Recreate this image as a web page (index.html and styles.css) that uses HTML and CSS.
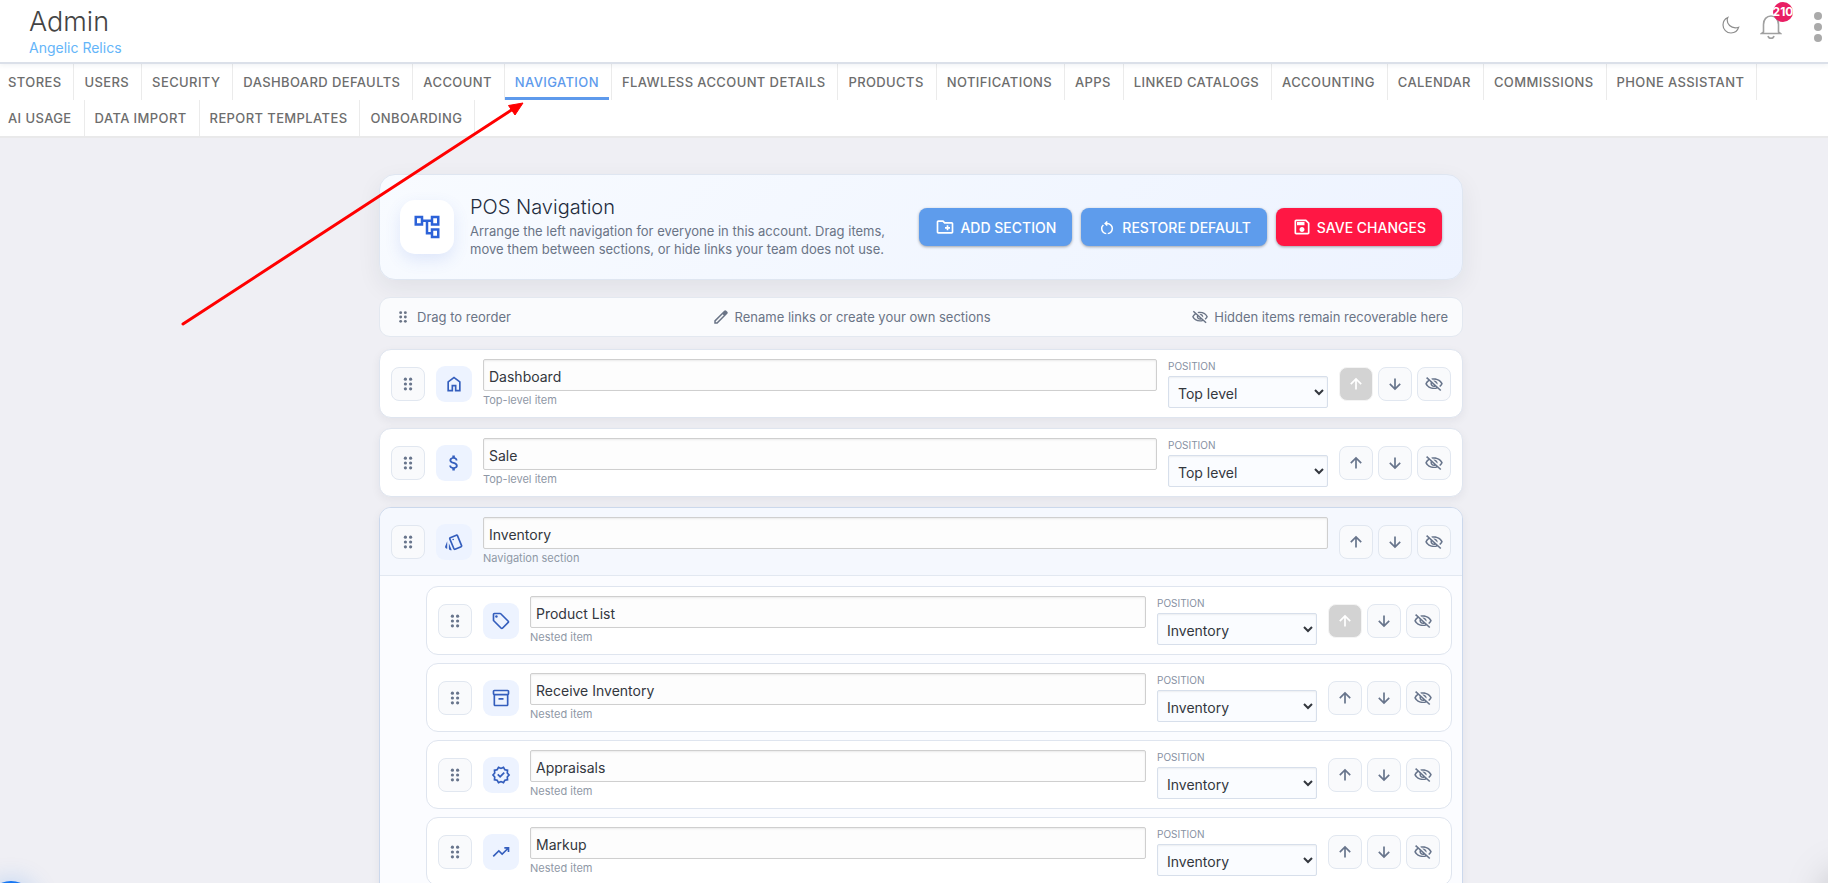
FILE: index.html
```html
<!DOCTYPE html>
<html lang="en">
<head>
<meta charset="utf-8">
<meta name="viewport" content="width=device-width, initial-scale=1">
<title>Admin - POS Navigation</title>
<link rel="stylesheet" href="styles.css">
</head>
<body>
<svg class="sprite" aria-hidden="true">
  <symbol id="drag" viewBox="0 0 20 20"><circle cx="7.4" cy="5.2" r="1.6"/><circle cx="12.6" cy="5.2" r="1.6"/><circle cx="7.4" cy="10" r="1.6"/><circle cx="12.6" cy="10" r="1.6"/><circle cx="7.4" cy="14.8" r="1.6"/><circle cx="12.6" cy="14.8" r="1.6"/></symbol>
  <symbol id="tree" viewBox="0 0 24 24"><path d="M22 11V3h-7v3H9V3H2v8h7V8h2v10h4v3h7v-8h-7v3h-2V8h2v3h7zM7 9H4V5h3v4zm10 6h3v4h-3v-4zm0-10h3v4h-3V5z"/></symbol>
  <symbol id="folder" viewBox="0 0 24 24"><path d="M20 6h-8l-2-2H4c-1.11 0-1.99.89-1.99 2L2 18c0 1.11.89 2 2 2h16c1.11 0 2-.89 2-2V8c0-1.11-.89-2-2-2zm0 12H4V6h5.17l2 2H20v10zm-6-2h2v-2h2v-2h-2v-2h-2v2h-2v2h2z"/></symbol>
  <symbol id="restore" viewBox="0 0 24 24"><path transform="translate(1.1 2.6) scale(.91 .87)" d="M11 20.95q-3.025-.375-5.012-2.638T4 13q0-1.65.65-3.162T6.5 7.2l1.425 1.425q-.95.85-1.437 1.975T6 13q0 2.2 1.4 3.888T11 18.95v2zm2 0v-2q2.175-.4 3.588-2.075T18 13q0-2.5-1.75-4.25T12 7h-.075l1.1 1.1-1.4 1.4-3.5-3.5 3.5-3.5 1.4 1.4L11.925 5H12q3.35 0 5.675 2.325T20 13q0 3.025-1.988 5.288T13 20.95z"/></symbol>
  <symbol id="save" viewBox="0 0 24 24"><path d="M17 3H5c-1.11 0-2 .9-2 2v14c0 1.1.89 2 2 2h14c1.1 0 2-.9 2-2V7l-4-4zm2 16H5V5h11.17L19 7.83V19zm-7-7c-1.66 0-3 1.34-3 3s1.34 3 3 3 3-1.34 3-3-1.34-3-3-3zM6 6h9v4H6z"/></symbol>
  <symbol id="edit" viewBox="0 0 24 24"><path fill-rule="evenodd" d="M3 21v-4.250L16.200 3.600q.6-.6 1.400-.6t1.400.6L20.400 5q.6.6.6 1.400t-.6 1.400L7.250 21zM5 19h1.400l9.300-9.250-1.450-1.450L5 17.600z"/></symbol>
  <symbol id="hide" viewBox="0 0 24 24"><path transform="translate(.5 1.6) scale(.96 .87)" d="M12 6c3.79 0 7.17 2.13 8.82 5.5-.59 1.22-1.42 2.27-2.41 3.12l1.41 1.41c1.39-1.23 2.49-2.77 3.18-4.53C21.27 7.11 17 4 12 4c-1.27 0-2.49.2-3.64.57l1.65 1.65C10.66 6.09 11.32 6 12 6zm-1.07 1.14L13 9.21c.57.25 1.03.71 1.28 1.28l2.07 2.07c.08-.34.14-.7.14-1.07C16.5 9.01 14.48 7 12 7c-.37 0-.72.05-1.07.14zM2.01 3.87l2.68 2.68C3.06 7.83 1.77 9.53 1 11.5 2.73 15.89 7 19 12 19c1.52 0 2.98-.29 4.32-.82l3.42 3.42 1.41-1.41L3.42 2.45 2.01 3.87zm7.5 7.5l2.61 2.61c-.04.01-.08.02-.12.02-1.38 0-2.5-1.12-2.5-2.5 0-.05.01-.08.01-.13zm-3.4-3.4l1.75 1.75c-.23.55-.36 1.15-.36 1.78 0 2.48 2.02 4.5 4.5 4.5.63 0 1.23-.13 1.77-.36l.98.98c-.88.24-1.8.38-2.75.38-3.79 0-7.17-2.13-8.82-5.5.7-1.43 1.72-2.61 2.93-3.53z"/></symbol>
  <symbol id="up" viewBox="0 0 20 20"><path class="arrow" d="M10 15.500V5.200M4.800 10.200L10 5l5.200 5.200"/></symbol>
  <symbol id="down" viewBox="0 0 20 20"><path class="arrow" d="M10 4.500v10.300M4.800 9.800L10 15l5.200-5.200"/></symbol>
  <symbol id="home" viewBox="0 0 24 24"><path d="M6 19h3v-6h6v6h3v-9l-6-4.500L6 10zm-2 2V9l8-6 8 6v12h-7v-6h-2v6z"/></symbol>
  <symbol id="dollar" viewBox="0 0 24 24"><path d="M11.8 10.9c-2.27-.59-3-1.2-3-2.15 0-1.09 1.01-1.85 2.7-1.85 1.78 0 2.44.85 2.5 2.1h2.21c-.07-1.72-1.12-3.3-3.21-3.810V3h-3v2.160c-1.940.420-3.500 1.680-3.500 3.610 0 2.310 1.910 3.460 4.700 4.130 2.500.6 3 1.480 3 2.410 0 .69-.49 1.790-2.700 1.790-2.060 0-2.870-.92-2.980-2.100h-2.200c.12 2.190 1.760 3.420 3.680 3.830V21h3v-2.150c1.950-.37 3.500-1.500 3.500-3.550 0-2.840-2.430-3.810-4.700-4.400z"/></symbol>
  <symbol id="cards" viewBox="0 0 24 24"><path d="M2.530 19.650l1.340.56v-9.030l-2.430 5.860c-.41 1.020.08 2.190 1.090 2.610zm19.500-3.700L17.070 3.980c-.31-.75-1.040-1.210-1.810-1.230-.26 0-.53.04-.79.15L7.100 5.950c-.75.31-1.210 1.030-1.230 1.800-.01.27.04.54.15.8l4.960 11.970c.31.76 1.050 1.220 1.830 1.230.26 0 .52-.05.77-.15l7.360-3.050c1.020-.42 1.510-1.590 1.090-2.600zm-9.200 3.800L7.870 7.790l7.350-3.040h.01l4.950 11.950-7.350 3.050z"/><circle cx="11" cy="9" r="1"/><path d="M5.880 19.750c0 1.100.9 2 2 2h1.450l-3.450-8.340v6.340z"/></symbol>
  <symbol id="tag" viewBox="0 0 24 24"><path d="M21.410 11.580l-9-9C12.050 2.220 11.550 2 11 2H4c-1.100 0-2 .9-2 2v7c0 .55.220 1.050.590 1.420l9 9c.36.36.86.58 1.410.58s1.050-.22 1.410-.59l7-7c.37-.36.59-.86.59-1.410s-.23-1.060-.59-1.420zM13 20.010L4 11V4h7v-.01l9 9-7 7.020z"/><circle cx="6.500" cy="6.500" r="1.500"/></symbol>
  <symbol id="archive" viewBox="0 0 24 24"><path d="M20 2H4c-1 0-2 .9-2 2v3.010c0 .72.43 1.340 1 1.690V20c0 1.100 1.100 2 2 2h14c.9 0 2-.9 2-2V8.700c.57-.35 1-.97 1-1.690V4c0-1.100-1-2-2-2zm-1 18H5V9h14v11zm1-13H4V4h16v3zM9 12h6v2H9z"/></symbol>
  <symbol id="verified" viewBox="0 0 24 24"><path d="M23 12l-2.440-2.780.34-3.680-3.610-.82-1.890-3.180L12 3 8.600 1.540 6.710 4.720l-3.610.81.34 3.680L1 12l2.440 2.780-.34 3.690 3.610.82 1.890 3.180L12 21l3.400 1.460 1.890-3.180 3.610-.82-.34-3.680L23 12zm-4.510 2.110l.26 2.790-2.740.620-1.430 2.410L12 18.820l-2.580 1.110-1.430-2.410-2.740-.62.26-2.800L3.660 12l1.850-2.120-.26-2.780 2.740-.61 1.430-2.410L12 5.180l2.580-1.110 1.430 2.410 2.740.62-.26 2.790L20.340 12l-1.850 2.110zM10.950 15.550l5.650-5.650-1.400-1.450-4.250 4.250-2.150-2.100L7.400 12z"/></symbol>
  <symbol id="trend" viewBox="0 0 24 24"><path d="M3.400 18L2 16.600l7.400-7.450 4 4L18.600 8H16V6h6v6h-2V9.400L13.400 16l-4-4z"/></symbol>
</svg>

<div class="app">
  <header class="topbar">
    <div class="brand">
      <h1 class="brand-title">Admin</h1>
      <a class="brand-account" href="#">Angelic Relics</a>
    </div>
    <div class="tools">
      <button class="tool" type="button" aria-label="Dark mode"><svg class="moon" viewBox="0 0 18 18"><path d="M5.800 1.500C2.800 2.800 1 5.600 1 9a8 8 0 0 0 8 8c3.600 0 6.700-2.400 7.700-5.800-1 .4-2.200.6-3.400.6C8.800 11.800 5.200 8.200 5.200 4c0-.9.200-1.700.6-2.500z"/></svg></button>
      <button class="tool bell-button" type="button" aria-label="Notifications">
        <svg class="bell" viewBox="0 0 22 26"><path d="M3.500 18.500v-8C3.500 5.500 6.500 2 11 2s7.500 3.500 7.500 8.500v8M3.500 18l-2 1.500h19l-2-1.500M8 22c.4 1.500 1.500 2.300 3 2.300s2.600-.8 3-2.300"/></svg>
        <span class="badge">210</span>
      </button>
      <button class="tool dots" type="button" aria-label="More"><span></span><span></span><span></span></button>
    </div>
  </header>

  <nav class="tabs-bar" aria-label="Admin sections">
    <ul class="tabs">
      <li><a href="#">Stores</a></li><li><a href="#">Users</a></li><li><a href="#">Security</a></li><li><a href="#">Dashboard Defaults</a></li><li><a href="#">Account</a></li><li><a class="active" href="#" aria-current="page">Navigation</a></li><li><a href="#">Flawless Account Details</a></li><li><a href="#">Products</a></li><li><a href="#">Notifications</a></li><li><a href="#">Apps</a></li><li><a href="#">Linked Catalogs</a></li><li><a href="#">Accounting</a></li><li><a href="#">Calendar</a></li><li><a href="#">Commissions</a></li><li><a href="#">Phone Assistant</a></li><li><a href="#">AI Usage</a></li><li><a href="#">Data Import</a></li><li><a href="#">Report Templates</a></li><li><a href="#">Onboarding</a></li>
    </ul>
  </nav>

  <main class="page">
    <div class="editor">
      <section class="hero">
        <div class="hero-icon"><svg><use href="#tree"/></svg></div>
        <div class="hero-copy">
          <h2>POS Navigation</h2>
          <p>Arrange the left navigation for everyone in this account. Drag items, move them between sections, or hide links your team does not use.</p>
        </div>
        <div class="hero-actions">
          <button class="btn" type="button"><svg><use href="#folder"/></svg>Add Section</button>
          <button class="btn" type="button"><svg><use href="#restore"/></svg>Restore Default</button>
          <button class="btn btn-danger" type="button"><svg><use href="#save"/></svg>Save Changes</button>
        </div>
      </section>

      <div class="hints">
        <span><svg><use href="#drag"/></svg>Drag to reorder</span>
        <span><svg><use href="#edit"/></svg>Rename links or create your own sections</span>
        <span><svg><use href="#hide"/></svg>Hidden items remain recoverable here</span>
      </div>

      <div class="list">
        <article class="row card">
          <button class="icon-btn" type="button" aria-label="Drag"><svg><use href="#drag"/></svg></button>
          <span class="tile"><svg><use href="#home"/></svg></span>
          <div class="name"><input type="text" id="n1" aria-label="Name" value="Dashboard"><label for="n1">Top-level item</label></div>
          <div class="position"><label for="p1">Position</label><select id="p1"><option>Top level</option><option>Inventory</option></select></div>
          <div class="actions"><button class="icon-btn" type="button" aria-label="Move up" disabled><svg><use href="#up"/></svg></button><button class="icon-btn" type="button" aria-label="Move down"><svg><use href="#down"/></svg></button><button class="icon-btn" type="button" aria-label="Hide"><svg><use href="#hide"/></svg></button></div>
        </article>

        <article class="row card">
          <button class="icon-btn" type="button" aria-label="Drag"><svg><use href="#drag"/></svg></button>
          <span class="tile"><svg><use href="#dollar"/></svg></span>
          <div class="name"><input type="text" id="n2" aria-label="Name" value="Sale"><label for="n2">Top-level item</label></div>
          <div class="position"><label for="p2">Position</label><select id="p2"><option>Top level</option><option>Inventory</option></select></div>
          <div class="actions"><button class="icon-btn" type="button" aria-label="Move up"><svg><use href="#up"/></svg></button><button class="icon-btn" type="button" aria-label="Move down"><svg><use href="#down"/></svg></button><button class="icon-btn" type="button" aria-label="Hide"><svg><use href="#hide"/></svg></button></div>
        </article>

        <section class="group card">
          <div class="row group-head">
            <button class="icon-btn" type="button" aria-label="Drag"><svg><use href="#drag"/></svg></button>
            <span class="tile"><svg><use href="#cards"/></svg></span>
            <div class="name"><input type="text" id="n3" aria-label="Name" value="Inventory"><label for="n3">Navigation section</label></div>
            <div class="actions"><button class="icon-btn" type="button" aria-label="Move up"><svg><use href="#up"/></svg></button><button class="icon-btn" type="button" aria-label="Move down"><svg><use href="#down"/></svg></button><button class="icon-btn" type="button" aria-label="Hide"><svg><use href="#hide"/></svg></button></div>
          </div>
          <div class="group-body">
            <article class="row nested">
              <button class="icon-btn" type="button" aria-label="Drag"><svg><use href="#drag"/></svg></button>
              <span class="tile"><svg><use href="#tag"/></svg></span>
              <div class="name"><input type="text" id="n4" aria-label="Name" value="Product List"><label for="n4">Nested item</label></div>
              <div class="position"><label for="p4">Position</label><select id="p4"><option>Inventory</option><option>Top level</option></select></div>
              <div class="actions"><button class="icon-btn" type="button" aria-label="Move up" disabled><svg><use href="#up"/></svg></button><button class="icon-btn" type="button" aria-label="Move down"><svg><use href="#down"/></svg></button><button class="icon-btn" type="button" aria-label="Hide"><svg><use href="#hide"/></svg></button></div>
            </article>
            <article class="row nested">
              <button class="icon-btn" type="button" aria-label="Drag"><svg><use href="#drag"/></svg></button>
              <span class="tile"><svg><use href="#archive"/></svg></span>
              <div class="name"><input type="text" id="n5" aria-label="Name" value="Receive Inventory"><label for="n5">Nested item</label></div>
              <div class="position"><label for="p5">Position</label><select id="p5"><option>Inventory</option><option>Top level</option></select></div>
              <div class="actions"><button class="icon-btn" type="button" aria-label="Move up"><svg><use href="#up"/></svg></button><button class="icon-btn" type="button" aria-label="Move down"><svg><use href="#down"/></svg></button><button class="icon-btn" type="button" aria-label="Hide"><svg><use href="#hide"/></svg></button></div>
            </article>
            <article class="row nested">
              <button class="icon-btn" type="button" aria-label="Drag"><svg><use href="#drag"/></svg></button>
              <span class="tile"><svg><use href="#verified"/></svg></span>
              <div class="name"><input type="text" id="n6" aria-label="Name" value="Appraisals"><label for="n6">Nested item</label></div>
              <div class="position"><label for="p6">Position</label><select id="p6"><option>Inventory</option><option>Top level</option></select></div>
              <div class="actions"><button class="icon-btn" type="button" aria-label="Move up"><svg><use href="#up"/></svg></button><button class="icon-btn" type="button" aria-label="Move down"><svg><use href="#down"/></svg></button><button class="icon-btn" type="button" aria-label="Hide"><svg><use href="#hide"/></svg></button></div>
            </article>
            <article class="row nested">
              <button class="icon-btn" type="button" aria-label="Drag"><svg><use href="#drag"/></svg></button>
              <span class="tile"><svg><use href="#trend"/></svg></span>
              <div class="name"><input type="text" id="n7" aria-label="Name" value="Markup"><label for="n7">Nested item</label></div>
              <div class="position"><label for="p7">Position</label><select id="p7"><option>Inventory</option><option>Top level</option></select></div>
              <div class="actions"><button class="icon-btn" type="button" aria-label="Move up"><svg><use href="#up"/></svg></button><button class="icon-btn" type="button" aria-label="Move down"><svg><use href="#down"/></svg></button><button class="icon-btn" type="button" aria-label="Hide"><svg><use href="#hide"/></svg></button></div>
            </article>
          </div>
        </section>
      </div>
    </div>
  </main>

  <svg class="pointer" viewBox="0 0 360 240" aria-hidden="true"><path class="pointer-line" d="M13 234L343 19"/><path class="pointer-head" d="M353 13L338.500 15.500L345 25z"/></svg>
  <div class="bubble bubble-left"></div>
  <div class="bubble bubble-right"></div>
</div>
</body>
</html>
```

FILE: styles.css
```css
* { box-sizing: border-box; }

body {
  margin: 0;
  background: #efeff4;
  color: #33373e;
  font-family: Inter, "Liberation Sans", sans-serif;
  font-size: 14px;
}

h1, h2, p, ul { margin: 0; padding: 0; }
button, input, select { font: inherit; color: inherit; }
button { cursor: pointer; }
svg { display: block; fill: currentColor; }
.sprite { position: absolute; width: 0; height: 0; }
.arrow { fill: none; stroke: currentColor; stroke-width: 1.7; }

.app { position: relative; height: 100vh; overflow: hidden; }

/* Top bar */
.topbar {
  position: relative;
  z-index: 1;
  display: flex;
  justify-content: space-between;
  height: 64px;
  padding: 0 0 0 29px;
  background: #fff;
  border-bottom: 2px solid #dbe0e9;
  box-shadow: 0 1px 5px rgba(40, 70, 90, .08);
}
.brand-title {
  padding-top: 5px;
  font-size: 27px;
  font-weight: 300;
  line-height: 33px;
  color: #444;
}
.brand-account {
  display: block;
  font-size: 14px;
  line-height: 20px;
  color: #64b5f9;
  text-decoration: none;
}
.tools { display: flex; align-items: flex-start; padding: 14px 3px 0 0; }
.tool { padding: 0; border: 0; background: none; color: #8c8c8c; }
.moon { width: 18px; height: 18px; margin: 2px 20px 0 0; fill: none; stroke: currentColor; stroke-width: 1.2; }
.bell-button { position: relative; margin-right: 32px; }
.bell { width: 22px; height: 26px; fill: none; stroke: #a0a0a0; stroke-width: 1.6; }
.badge {
  position: absolute;
  top: -12px;
  left: 13px;
  display: flex;
  justify-content: center;
  width: 20px;
  height: 20px;
  border-radius: 50%;
  background: #e91e63;
  color: #fff;
  font-size: 12px;
  font-weight: 700;
  line-height: 20px;
}
.dots { display: grid; gap: 3px; padding: 0 3px 0 0; margin-top: -2px; }
.dots span { width: 8px; height: 8px; border-radius: 50%; background: #aaa; }

/* Tabs */
.tabs-bar { background: #fff; border-bottom: 2px solid #e9e9ea; }
.tabs { display: flex; flex-wrap: wrap; margin-left: -2px; list-style: none; }
.tabs li { padding-right: 2px; border-right: 1px solid #ebebeb; }
.tabs a {
  display: block;
  height: 36px;
  padding: 0 10px;
  border-bottom: 3px solid transparent;
  color: #6d6d6d;
  font-size: 13px;
  font-weight: 500;
  line-height: 37px;
  letter-spacing: .03em;
  text-transform: uppercase;
  text-decoration: none;
}
.tabs .active { color: #5e9aec; border-bottom-color: #5e9aec; }

/* Page */
.page { padding: 36px 14px 0 28px; }
.editor { max-width: 1084px; margin: 0 auto; }

.hero {
  display: flex;
  align-items: center;
  padding: 18px 20px;
  border: 1px solid #dfe6f1;
  border-radius: 16px;
  background: linear-gradient(135deg, #f8fbff, #edf3ff);
  box-shadow: 0 8px 24px rgba(30, 41, 59, .07);
}
.hero-icon {
  display: grid;
  place-items: center;
  flex: none;
  width: 54px;
  height: 54px;
  margin-right: 16px;
  border-radius: 15px;
  background: #fff;
  color: #2c62d8;
  box-shadow: 0 6px 16px rgba(60, 100, 220, .13);
}
.hero-icon svg { width: 30px; height: 30px; }
.hero-copy { flex: 0 1 420px; padding-bottom: 3px; }
.hero-copy h2 { font-size: 20px; font-weight: 300; line-height: 29px; color: #232c3d; }
.hero-copy p { font-size: 13px; line-height: 18px; color: #6a7486; }
.hero-actions { display: flex; gap: 9px; margin-left: auto; }
.btn {
  display: flex;
  align-items: center;
  gap: 5px;
  height: 38px;
  padding: 0 16px;
  border: 0;
  border-radius: 8px;
  background: #5e9cec;
  box-shadow: 0 1px 3px rgba(0, 0, 0, .35);
  color: #fff;
  font-weight: 500;
  text-transform: uppercase;
  white-space: nowrap;
}
.btn svg { width: 20px; height: 20px; }
.btn-danger { background: #ff1744; }

.hints {
  display: flex;
  justify-content: space-between;
  align-items: center;
  height: 40px;
  margin-top: 17px;
  padding: 0 14px;
  border: 1px solid #e3e8f0;
  border-radius: 11px;
  background: #fafbfd;
  color: #6a7486;
  font-size: 13px;
  line-height: 18px;
}
.hints span { display: flex; align-items: center; gap: 5px; }
.hints svg { width: 18px; height: 18px; }

.list { display: grid; gap: 10px; margin-top: 12px; }
.card {
  border: 1px solid #dfe5ef;
  border-radius: 12px;
  background: #fff;
  box-shadow: 0 3px 10px rgba(30, 41, 59, .06);
}
.row { display: flex; align-items: center; gap: 11px; padding: 9px 11px; }
.tile {
  display: grid;
  place-items: center;
  flex: none;
  width: 36px;
  height: 36px;
  border-radius: 9px;
  background: #edf3ff;
  color: #345ebd;
}
.tile svg { width: 20px; height: 20px; }
.icon-btn {
  display: grid;
  place-items: center;
  flex: none;
  width: 34px;
  height: 34px;
  padding: 0;
  border: 1px solid #e1e7f0;
  border-radius: 8px;
  background: #f9fafc;
  color: #68758c;
}
.icon-btn svg { width: 20px; height: 20px; }
.icon-btn:disabled { background: #d3d3d3; border-color: #f4f4f4; color: #fff; }
.name { flex: 1; display: grid; gap: 1px; min-width: 0; }
.name input {
  width: 100%;
  height: 32px;
  padding: 3px 5px 0;
  border: 1px solid #cfcfcf;
  border-radius: 2px;
  background: #fdfdfd;
  box-shadow: inset 0 1px 2px rgba(0, 0, 0, .08);
}
.name label { font-size: 11px; line-height: 16px; color: #8f98a6; }
.position { display: grid; gap: 3px; width: 160px; }
.position label { font-size: 10px; line-height: 14px; color: #8791a3; text-transform: uppercase; }
.position select {
  width: 100%;
  height: 32px;
  padding: 3px 5px 0;
  border: 1px solid #d7dfeb;
  border-radius: 2px;
  background-color: #fafcff;
  box-shadow: inset 0 1px 2px rgba(0, 0, 0, .06);
}
.actions { display: flex; gap: 5px; }

.group { border-color: #cbd8ec; background: #fbfcff; }
.group-head { border-bottom: 1px solid #e2e8f1; border-radius: 11px 11px 0 0; background: #f5f8fe; }
.group-body { display: grid; gap: 8px; padding: 10px 10px 10px 46px; }
.nested { border: 1px solid #dfe5ef; border-radius: 12px; background: #fff; }

/* Overlays */
.pointer { position: absolute; top: 90px; left: 170px; width: 360px; height: 240px; pointer-events: none; z-index: 2; }
.pointer-line { fill: none; stroke: #f00; stroke-width: 3; stroke-linecap: round; }
.pointer-head { fill: #f00; stroke: #f00; stroke-width: 1; }
.bubble { position: absolute; width: 48px; height: 48px; border-radius: 50%; }
.bubble-left { left: -13px; bottom: -46px; background: #1877f2; box-shadow: 0 0 24px rgba(24, 119, 242, .25); }
.bubble-right { right: -50px; bottom: -44px; background: #777; box-shadow: 0 0 44px rgba(0, 0, 0, .35); }
```
